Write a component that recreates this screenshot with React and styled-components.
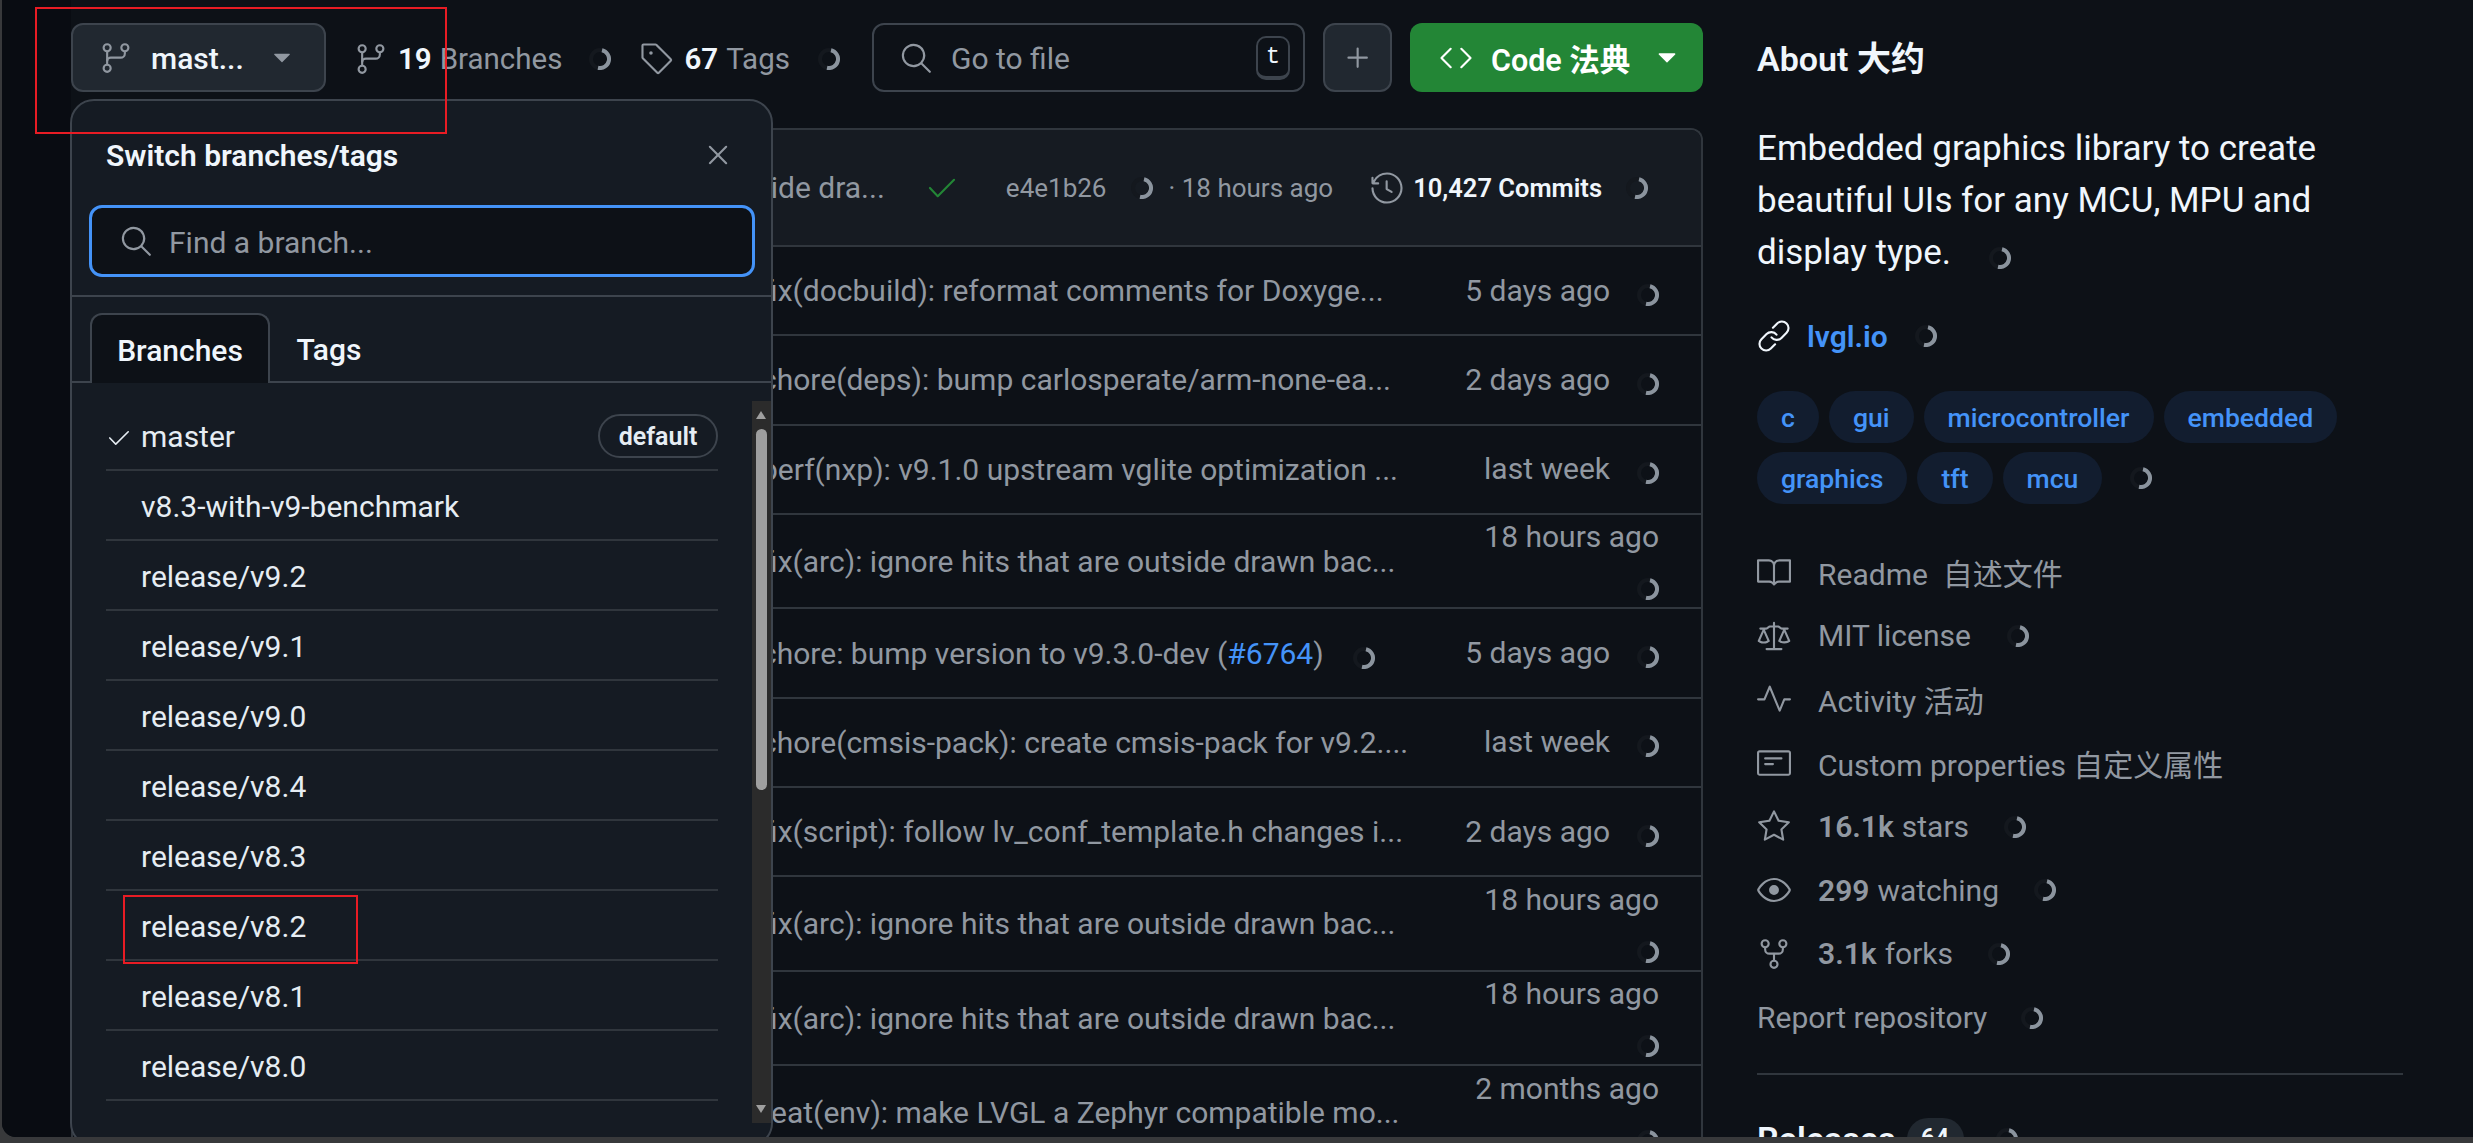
import React from "react";
import styled, { createGlobalStyle } from "styled-components";
import {
  GoBook,
  GoCheck,
  GoCode,
  GoEye,
  GoGitBranch,
  GoHistory,
  GoLaw,
  GoLink,
  GoNote,
  GoPlus,
  GoPulse,
  GoRepoForked,
  GoSearch,
  GoStar,
  GoTag,
  GoTriangleDown,
  GoX
} from "react-icons/go";

const Global = createGlobalStyle`
  html, body {
    margin: 0;
    height: 100%;
    overflow: hidden;
    background: #38393b;
  }
  * {
    box-sizing: border-box;
  }
`;

const Frame = styled.div`
  position: relative;
  width: 2473px;
  height: 1143px;
  padding: 0 0 6px 2px;
  font-family: Roboto, "Noto Sans CJK SC", sans-serif;
  font-size: 30px;
  color: #9198a1;
`;

const Window = styled.div`
  position: relative;
  display: flex;
  height: 100%;
  overflow: hidden;
  background: #0d1117;
  border-bottom-left-radius: 14px;
`;

const Gutter = styled.div`
  flex: none;
  width: 69px;
  background: #090c12;
`;

const Main = styled.main`
  flex: none;
  width: 1632px;
  padding-top: 23px;
`;

const Toolbar = styled.div`
  display: flex;
  align-items: center;
  height: 69px;
  margin-bottom: 36px;
`;

const BranchButton = styled.div`
  display: flex;
  align-items: center;
  width: 255px;
  height: 69px;
  padding-left: 26px;
  background: #212830;
  border: 2px solid #3d444d;
  border-radius: 12px;
  color: #f0f6fc;
  font-weight: 500;
  svg {
    color: #9198a1;
  }
`;

const BranchName = styled.span`
  margin: 0 23px 0 18px;
  padding-top: 2px;
`;

const Count = styled.div`
  display: flex;
  align-items: center;
  margin-left: ${(p) => p.$gap}px;
  padding-top: 2px;
  font-size: 29.5px;
  white-space: nowrap;
  svg:first-child {
    flex: none;
    margin-right: 10px;
  }
  b {
    color: #f0f6fc;
    font-weight: 600;
    margin-right: 8px;
  }
`;

const SpinnerSvg = styled.svg`
  flex: none;
  display: inline-block;
  vertical-align: ${(p) => p.$drop || 0}px;
  margin-left: ${(p) => p.$left || 0}px;
`;

const Spinner = ({ left, drop }) => (
  <SpinnerSvg $left={left} $drop={drop} width="22" height="22" viewBox="0 0 22 22" fill="none">
    <circle cx="11" cy="11" r="9" stroke="#14181e" strokeWidth="4" />
    <path d="M13 2.2A9 9 0 0 1 9 19.8" stroke="#8b949e" strokeWidth="4" />
  </SpinnerSvg>
);

const FileSearch = styled.div`
  display: flex;
  align-items: center;
  width: 433px;
  height: 69px;
  margin-left: auto;
  padding: 0 13px 0 25px;
  border: 2px solid #3d444d;
  border-radius: 12px;
`;

const Placeholder = styled.span`
  flex: 1;
  margin-left: ${(p) => p.$gap}px;
  padding-top: 2px;
`;

const Kbd = styled.span`
  display: flex;
  align-items: center;
  justify-content: center;
  width: 34px;
  height: 44px;
  border: 2px solid #3d444d;
  border-bottom-width: 4px;
  border-radius: 10px;
  color: #f0f6fc;
  font-family: "Liberation Mono", monospace;
  font-size: 24px;
`;

const PlusButton = styled.div`
  display: flex;
  align-items: center;
  justify-content: center;
  width: 69px;
  height: 69px;
  margin-left: 18px;
  background: #212830;
  border: 2px solid #3d444d;
  border-radius: 12px;
`;

const CodeButton = styled.div`
  display: flex;
  align-items: center;
  width: 293px;
  height: 69px;
  margin-left: 18px;
  padding-left: 29px;
  background: #238636;
  border-radius: 12px;
  color: #fff;
  font-weight: 600;
  white-space: nowrap;
`;

const CodeLabel = styled.span`
  margin: 0 21px 0 18px;
  font-size: 30.5px;
`;

const Table = styled.div`
  border: 2px solid #30363d;
  border-bottom: 0;
  border-radius: 12px 12px 0 0;
  overflow: hidden;
`;

const CommitBar = styled.div`
  display: flex;
  align-items: center;
  justify-content: flex-end;
  height: 115px;
  padding-right: 53px;
  background: #161b22;
  font-size: 26px;
  white-space: nowrap;
  svg {
    flex: none;
  }
`;

const CommitMessage = styled.span`
  margin-right: 40px;
  font-size: 30px;
`;

const CheckMark = styled(GoCheck)`
  margin-right: 47px;
  color: #238636;
`;

const ShortSha = styled.span`
  margin-right: 25px;
`;

const CommitAge = styled.span`
  margin: 0 37px 0 15px;
`;

const CommitCount = styled.span`
  margin: 0 24px 0 9px;
  color: #f0f6fc;
  font-size: 25.5px;
  font-weight: 600;
`;

const FileRow = styled.div`
  display: flex;
  align-items: center;
  height: ${(p) => (p.$tall ? 94.5 : 89.3)}px;
  padding-left: 688px;
  border-top: 2px solid #30363d;
  white-space: nowrap;
`;

const Message = styled.div`
  flex: none;
  width: 650px;
  a {
    color: #4493f8;
  }
`;

const Age = styled.div`
  flex: none;
  width: 200px;
  margin-left: 48px;
  margin-right: auto;
  text-align: right;
  white-space: normal;
  line-height: 48px;
`;

const Popup = styled.div`
  position: absolute;
  top: 99px;
  bottom: -10px;
  left: 68px;
  display: flex;
  flex-direction: column;
  width: 703px;
  background: #151b23;
  border: 2px solid #3d444d;
  border-radius: 24px;
  color: #f0f6fc;
`;

const PopupHead = styled.div`
  display: flex;
  align-items: center;
  justify-content: space-between;
  height: 104px;
  padding: 4px 36px 0 34px;
  font-weight: 600;
  svg {
    color: #9198a1;
  }
`;

const BranchInput = styled.div`
  display: flex;
  align-items: center;
  height: 72px;
  margin: 0 16px 0 17px;
  padding-left: 27px;
  background: #0d1117;
  border: 3px solid #4493f8;
  border-radius: 13px;
  color: #9198a1;
`;

const PopupTabs = styled.div`
  display: flex;
  height: 88px;
  margin-top: 18px;
  padding: 16px 0 0 18px;
  border-top: 2px solid #3d444d;
  border-bottom: 2px solid #3d444d;
`;

const Tab = styled.div`
  display: flex;
  align-items: center;
  justify-content: center;
  width: ${(p) => p.$width}px;
  height: 70px;
  padding-top: 2px;
  font-weight: 500;
  ${(p) =>
    p.$active &&
    `
    background: #0d1117;
    border: 2px solid #3d444d;
    border-bottom: 0;
    border-radius: 12px 12px 0 0;
  `}
`;

const ListArea = styled.div`
  display: flex;
  flex: 1;
  min-height: 0;
`;

const BranchList = styled.div`
  flex: 1;
  padding: 18px 34px 0;
`;

const BranchRow = styled.div`
  position: relative;
  display: flex;
  align-items: center;
  justify-content: space-between;
  height: 70px;
  padding: 2px 0 0 35px;
  border-bottom: 2px solid #30363d;
  color: #e6edf3;
`;

const RowCheck = styled(GoCheck)`
  position: absolute;
  left: 0;
  top: 24px;
`;

const DefaultPill = styled.span`
  display: flex;
  align-items: center;
  justify-content: center;
  width: 120px;
  height: 44px;
  border: 2px solid #3d444d;
  border-radius: 22px;
  font-size: 25px;
  font-weight: 600;
`;

const ScrollTrack = styled.div`
  position: relative;
  flex: none;
  width: 19px;
  height: 722px;
  margin-top: 18px;
  background: #2b2b2b;
`;

const ScrollThumb = styled.div`
  position: absolute;
  top: 28px;
  left: 4px;
  width: 11px;
  height: 361px;
  background: #9f9f9f;
  border-radius: 6px;
`;

const ScrollArrow = styled.div`
  position: absolute;
  left: 4px;
  ${(p) => (p.$down ? "bottom: 10px" : "top: 10px")};
  width: 0;
  height: 0;
  border-left: 5.5px solid transparent;
  border-right: 5.5px solid transparent;
  ${(p) => (p.$down ? "border-top" : "border-bottom")}: 8px solid #9f9f9f;
`;

const Sidebar = styled.aside`
  flex: none;
  width: 646px;
  margin-left: 54px;
  padding-top: 36px;
`;

const SideTitle = styled.h2`
  display: flex;
  align-items: center;
  height: 40px;
  margin: 0;
  color: #f0f6fc;
  font-size: 34px;
  font-weight: 600;
`;

const Description = styled.p`
  width: 600px;
  margin: 47px 0 0;
  color: #f0f6fc;
  font-size: 35px;
  line-height: 52px;
`;

const SiteLink = styled.div`
  display: flex;
  align-items: center;
  height: 40px;
  margin-top: 37px;
  color: #4493f8;
  font-weight: 600;
  svg:first-child {
    color: #f0f6fc;
    margin-right: 16px;
  }
`;

const Topics = styled.div`
  display: flex;
  flex-wrap: wrap;
  align-items: center;
  gap: 9px 10px;
  margin-top: 35px;
`;

const Topic = styled.span`
  display: flex;
  align-items: center;
  height: 52px;
  padding: 0 24px;
  background: #121d2f;
  border-radius: 26px;
  color: #4493f8;
  font-size: 26.6px;
  font-weight: 500;
`;

const Stats = styled.div`
  margin-top: 36px;
`;

const Stat = styled.div`
  display: flex;
  align-items: center;
  height: 63.7px;
  svg:first-child {
    margin-right: 27px;
  }
  b {
    font-weight: 600;
    margin-right: 8px;
  }
`;

const Rule = styled.hr`
  height: 2px;
  margin: 23px 0 0;
  border: 0;
  background: #30363d;
`;

const Releases = styled.div`
  display: flex;
  align-items: center;
  height: 42px;
  margin-top: 43px;
  color: #f0f6fc;
  font-size: 34px;
  font-weight: 600;
`;

const ReleaseCount = styled.span`
  display: flex;
  align-items: center;
  justify-content: center;
  width: 57px;
  height: 42px;
  margin: 0 32px 0 11px;
  background: #212830;
  border-radius: 21px;
  font-size: 25px;
`;

const Annotation = styled.div`
  position: absolute;
  left: ${(p) => p.$x}px;
  top: ${(p) => p.$y}px;
  width: ${(p) => p.$w}px;
  height: ${(p) => p.$h}px;
  border: 2px solid #e81c24;
`;

const commits = [
  { text: "fix(docbuild): reformat comments for Doxyge...", age: "5 days ago" },
  { text: "chore(deps): bump carlosperate/arm-none-ea...", age: "2 days ago" },
  { text: "perf(nxp): v9.1.0 upstream vglite optimization ...", age: "last week" },
  { text: "fix(arc): ignore hits that are outside drawn bac...", age: "18 hours ago", tall: true },
  { text: "chore: bump version to v9.3.0-dev (", pr: "#6764", age: "5 days ago" },
  { text: "chore(cmsis-pack): create cmsis-pack for v9.2....", age: "last week" },
  { text: "fix(script): follow lv_conf_template.h changes i...", age: "2 days ago" },
  { text: "fix(arc): ignore hits that are outside drawn bac...", age: "18 hours ago", tall: true },
  { text: "fix(arc): ignore hits that are outside drawn bac...", age: "18 hours ago", tall: true },
  { text: "feat(env): make LVGL a Zephyr compatible mo...", age: "2 months ago", tall: true }
];

const branches = [
  "master",
  "v8.3-with-v9-benchmark",
  "release/v9.2",
  "release/v9.1",
  "release/v9.0",
  "release/v8.4",
  "release/v8.3",
  "release/v8.2",
  "release/v8.1",
  "release/v8.0"
];

const topics = ["c", "gui", "microcontroller", "embedded", "graphics", "tft", "mcu"];

const App = () => (
  <Frame>
    <Global />
    <Window>
      <Gutter />
      <Main>
        <Toolbar>
          <BranchButton>
            <GoGitBranch size={34} />
            <BranchName>mast...</BranchName>
            <GoTriangleDown size={30} />
          </BranchButton>
          <Count $gap={28}>
            <GoGitBranch size={34} />
            <b>19</b>Branches
            <Spinner left={27} />
          </Count>
          <Count $gap={29}>
            <GoTag size={34} />
            <b>67</b>Tags
            <Spinner left={28} />
          </Count>
          <FileSearch>
            <GoSearch size={34} />
            <Placeholder $gap={18}>Go to file</Placeholder>
            <Kbd>t</Kbd>
          </FileSearch>
          <PlusButton>
            <GoPlus size={34} />
          </PlusButton>
          <CodeButton>
            <GoCode size={34} />
            <CodeLabel>Code 法典</CodeLabel>
            <GoTriangleDown size={32} />
          </CodeButton>
        </Toolbar>
        <Table>
          <CommitBar>
            <CommitMessage>fix(arc): ignore hits that are outside dra...</CommitMessage>
            <CheckMark size={34} />
            <ShortSha>e4e1b26</ShortSha>
            <Spinner />
            <CommitAge>· 18 hours ago</CommitAge>
            <GoHistory size={34} />
            <CommitCount>10,427 Commits</CommitCount>
            <Spinner />
          </CommitBar>
          {commits.map((commit, i) => (
            <FileRow key={i} $tall={commit.tall}>
              <Message>
                {commit.text}
                {commit.pr && (
                  <>
                    <a>{commit.pr}</a>)<Spinner left={29} drop={-5} />
                  </>
                )}
              </Message>
              <Age>
                {commit.age}
                <Spinner left={27} drop={-5} />
              </Age>
            </FileRow>
          ))}
        </Table>
      </Main>
      <Sidebar>
        <SideTitle>About 大约</SideTitle>
        <Description>
          Embedded graphics library to create beautiful UIs for any MCU, MPU and display type.
          <Spinner left={38} drop={-5} />
        </Description>
        <SiteLink>
          <GoLink size={34} />
          lvgl.io
          <Spinner left={27} />
        </SiteLink>
        <Topics>
          {topics.map((topic) => (
            <Topic key={topic}>{topic}</Topic>
          ))}
          <Spinner left={18} />
        </Topics>
        <Stats>
          <Stat>
            <GoBook size={34} />
            Readme &nbsp;自述文件
          </Stat>
          <Stat>
            <GoLaw size={34} />
            MIT license
            <Spinner left={36} />
          </Stat>
          <Stat>
            <GoPulse size={34} />
            Activity 活动
          </Stat>
          <Stat>
            <GoNote size={34} />
            Custom properties 自定义属性
          </Stat>
          <Stat>
            <GoStar size={34} />
            <b>16.1k</b>stars
            <Spinner left={35} />
          </Stat>
          <Stat>
            <GoEye size={34} />
            <b>299</b>watching
            <Spinner left={35} />
          </Stat>
          <Stat>
            <GoRepoForked size={34} />
            <b>3.1k</b>forks
            <Spinner left={35} />
          </Stat>
          <Stat>
            Report repository
            <Spinner left={34} />
          </Stat>
        </Stats>
        <Rule />
        <Releases>
          Releases
          <ReleaseCount>64</ReleaseCount>
          <Spinner />
        </Releases>
      </Sidebar>
      <Popup>
        <PopupHead>
          Switch branches/tags
          <GoX size={34} />
        </PopupHead>
        <BranchInput>
          <GoSearch size={34} />
          <Placeholder $gap={16}>Find a branch...</Placeholder>
        </BranchInput>
        <PopupTabs>
          <Tab $active $width={180}>
            Branches
          </Tab>
          <Tab $width={118}>Tags</Tab>
        </PopupTabs>
        <ListArea>
          <BranchList>
            {branches.map((branch, i) => (
              <BranchRow key={branch}>
                {i === 0 && <RowCheck size={26} />}
                {branch}
                {i === 0 && <DefaultPill>default</DefaultPill>}
              </BranchRow>
            ))}
          </BranchList>
          <ScrollTrack>
            <ScrollArrow />
            <ScrollThumb />
            <ScrollArrow $down />
          </ScrollTrack>
        </ListArea>
      </Popup>
    </Window>
    <Annotation $x={35} $y={7} $w={412} $h={127} />
    <Annotation $x={123} $y={895} $w={235} $h={69} />
  </Frame>
);

export default App;
